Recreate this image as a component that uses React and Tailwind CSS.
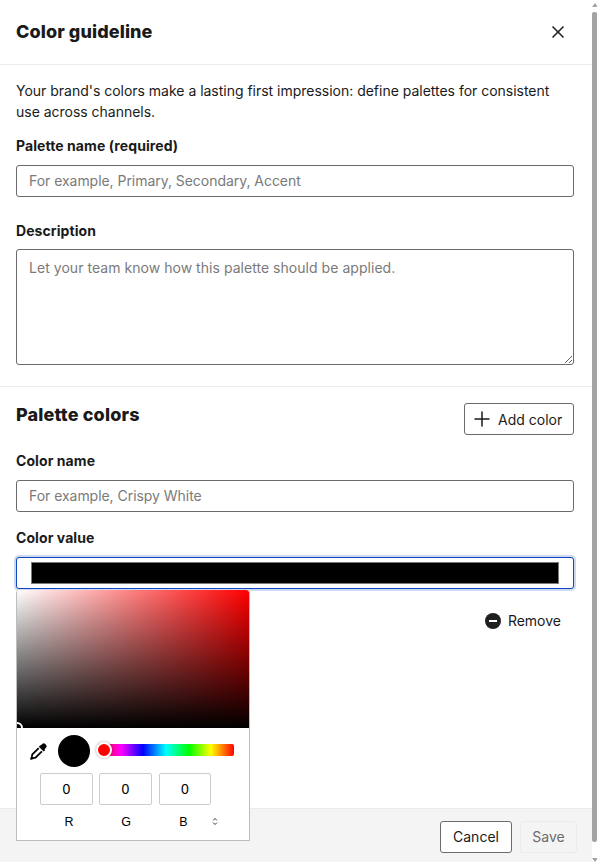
import React from 'react'
import { X, Plus } from 'lucide-react'

function Field({ label, placeholder }) {
  return (
    <div>
      <label className="block text-sm font-bold leading-5 tracking-[0.08px] text-[#1a1a1a]">{label}</label>
      <input
        placeholder={placeholder}
        className="mt-[9px] block h-8 w-full rounded-[3px] border border-[#6b6b6b] bg-white px-3 pb-[2px] text-sm tracking-[-0.04px] text-[#1a1a1a] outline-none placeholder:text-[#7a7a7a]"
      />
    </div>
  )
}

function Channel({ value, label, width, labelClass }) {
  return (
    <div className={`flex flex-col items-center ${width}`}>
      <div className="flex h-8 w-full items-center justify-center rounded-[2px] border border-[#ccc] font-['Liberation_Sans',sans-serif] text-sm text-black">
        {value}
      </div>
      <span className={`mt-[7px] font-['Liberation_Sans',sans-serif] text-[12.5px] leading-5 text-black ${labelClass}`}>{label}</span>
    </div>
  )
}

function ColorPicker() {
  return (
    <div className="absolute left-4 top-[590px] z-10 w-[234px] rounded-t-[3px] border-x border-b border-[#bdbdbd] bg-white pb-[8px]">
      <div className="relative h-[138px] overflow-hidden rounded-t-[3px] bg-[linear-gradient(to_top,#000,transparent),linear-gradient(to_right,#fff,#f00)]">
        <div className="absolute -left-[6px] bottom-[-6px] h-3 w-3 rounded-full border-2 border-white bg-black" />
      </div>
      <div className="mt-[7px] flex items-center pl-[13px]">
        <svg viewBox="0 0 16 16" className="h-[17px] w-[17px] text-black" fill="none">
          <path d="M10 2.400 11.500 1a2 2 0 0 1 2.800 0l.7.700a2 2 0 0 1 0 2.800l-1.400 1.500.7.700-1.400 1.400-4.600-4.600 1.400-1.400z" fill="currentColor" />
          <path d="M8.200 4.800 2.200 10.800 1.700 13 1 15l2-.7 2.200-.5 6-6" stroke="currentColor" strokeWidth="1.700" strokeLinejoin="round" />
        </svg>
        <div className="ml-[11px] h-8 w-8 rounded-full bg-black" />
        <div className="relative ml-[8px] h-3 w-[136px] -translate-y-px rounded-[2px] bg-[linear-gradient(to_right,#f00,#f0f_17%,#00f_33%,#0ff_50%,#0f0_67%,#ff0_83%,#f00)]">
          <div className="absolute -left-[2px] top-[-2px] h-4 w-4 rounded-full border-2 border-white bg-[#f00] shadow-[0_0_3px_rgba(0,0,0,0.35)]" />
        </div>
      </div>
      <div className="mt-[6px] flex pl-[23px]">
        <Channel value="0" label="R" width="w-[53px]" labelClass="ml-[5px]" />
        <div className="w-[6px]" />
        <Channel value="0" label="G" width="w-[53px]" labelClass="ml-px" />
        <div className="w-[7px]" />
        <Channel value="0" label="B" width="w-[52px]" labelClass="mr-[3px]" />
        <svg viewBox="0 0 8 12" className="ml-[1px] mt-[44px] h-[9px] w-[6px] shrink-0 text-[#333]" fill="none" stroke="currentColor" strokeWidth="1.300">
          <path d="M1.500 4.500 4 2l2.500 2.500M1.500 7.500 4 10l2.500-2.500" />
        </svg>
      </div>
    </div>
  )
}

export default function App() {
  return (
    <div className="relative flex h-[862px] w-[597px] overflow-hidden bg-white font-['Inter',sans-serif] text-[#1a1a1a]">
      <div className="flex w-[592px] flex-col">
        <header className="flex h-[65px] shrink-0 items-center justify-between border-b border-[#ebebeb] pl-4 pr-6">
          <h1 className="pb-[2px] text-[18px] font-extrabold tracking-[0.1px]">Color guideline</h1>
          <X size={20} strokeWidth={2} className="text-[#222]" />
        </header>

        <section className="border-b border-[#ebebeb] pb-[21px] pl-4 pr-[18px] pt-[15px]">
          <p className="text-sm leading-[21px] tracking-[-0.015px] text-[#1a1a1a]">
            Your brand's colors make a lasting first impression: define palettes for consistent use across channels.
          </p>
          <div className="mt-[14px]">
            <Field label="Palette name (required)" placeholder="For example, Primary, Secondary, Accent" />
          </div>
          <div className="mt-[24px]">
            <label className="block text-sm font-bold leading-5 tracking-[0.08px]">Description</label>
            <textarea
              placeholder="Let your team know how this palette should be applied."
              className="mt-[8px] block h-[116px] w-full rounded-[3px] border border-[#6b6b6b] bg-white px-3 py-2 text-sm leading-5 tracking-[0.04px] outline-none placeholder:text-[#7a7a7a]"
            />
          </div>
        </section>

        <section className="flex-1 pl-4 pr-[18px] pt-[16px]">
          <div className="flex items-start justify-between">
            <h2 className="text-[18px] font-extrabold leading-6 tracking-[0.15px]">Palette colors</h2>
            <button className="flex h-8 w-[110px] items-center gap-1 rounded-[3px] border border-[#6b6b6b] bg-white pl-[5px] text-sm">
              <Plus size={24} strokeWidth={1.5} />
              <span className="pt-px">Add color</span>
            </button>
          </div>
          <div className="mt-[16px]">
            <Field label="Color name" placeholder="For example, Crispy White" />
          </div>
          <div className="mt-[16px]">
            <label className="block text-sm font-bold leading-5 tracking-[0.08px]">Color value</label>
            <div className="mt-[9px] h-8 rounded-[3px] border border-[#0f46c4] bg-white px-[14px] py-[4px] shadow-[0_0_0_2px_#ccd9ee]">
              <div className="h-[22px] border border-[#7a7a7a] bg-black" />
            </div>
          </div>
          <div className="mt-[22px] flex justify-end pr-[13px]">
            <button className="flex items-center gap-[7px] text-sm leading-5">
              <span className="flex h-4 w-4 items-center justify-center rounded-full bg-[#1f1f1f]">
                <span className="h-[2px] w-2 bg-white" />
              </span>
              Remove
            </button>
          </div>
        </section>

        <footer className="flex h-[54px] shrink-0 items-start justify-end gap-2 border-t border-[#ebebeb] bg-[#f4f4f4] pr-[15px] pt-3">
          <button className="h-8 w-[72px] rounded-[3px] border border-[#6b6b6b] bg-white text-sm">Cancel</button>
          <button className="h-8 w-[57px] rounded-[3px] border border-[#ebebeb] text-sm text-[#6b6b6b]">Save</button>
        </footer>
      </div>

      <div className="flex w-[5px] shrink-0 flex-col items-center bg-white">
        <div className="mt-[3px] h-0 w-0 border-x-[3px] border-b-[4px] border-x-transparent border-b-[#a3a3a3]" />
        <div className="mt-[5px] h-[830px] w-full rounded-[2px] bg-[#a3a3a3]" />
        <div className="mt-[16px] h-0 w-0 border-x-[3px] border-t-[4px] border-x-transparent border-t-[#a3a3a3]" />
      </div>

      <ColorPicker />
    </div>
  )
}
